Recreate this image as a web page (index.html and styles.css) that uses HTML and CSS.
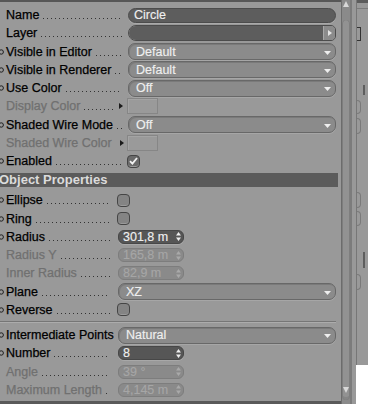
FILE: index.html
```html
<!DOCTYPE html>
<html>
<head>
<meta charset="utf-8">
<link rel="stylesheet" href="styles.css">
</head>
<body>
<div class="app">
  <div class="panel">
    <div class="topline"></div>
    <div class="sec basic">
      <div class="row">
        <div class="lab"><span class="mk"></span><span class="t">Name</span><span class="dots"></span></div>
        <div class="fld dark">Circle</div>
      </div>
      <div class="row">
        <div class="lab"><span class="mk"></span><span class="t">Layer</span><span class="dots"></span></div>
        <div class="layer"><div class="lay-f"></div><div class="lay-b"><svg width="4" height="6" viewBox="0 0 4 6"><path d="M0 0L4 3L0 6Z" fill="#e4e4e4"/></svg></div></div>
      </div>
      <div class="row">
        <div class="lab"><span class="mk"><svg width="5" height="6" viewBox="0 0 5 6"><circle cx="1.2" cy="3" r="2.2" fill="#9a9a9a" stroke="#1e1e1e"/></svg></span><span class="t">Visible in Editor</span><span class="dots"></span></div>
        <div class="fld drop"><span>Default</span><svg width="7" height="4" viewBox="0 0 7 4"><path d="M0 0H7L3.5 4Z" fill="#eee"/></svg></div>
      </div>
      <div class="row">
        <div class="lab"><span class="mk"><svg width="5" height="6" viewBox="0 0 5 6"><circle cx="1.2" cy="3" r="2.2" fill="#9a9a9a" stroke="#1e1e1e"/></svg></span><span class="t">Visible in Renderer</span><span class="dots"></span></div>
        <div class="fld drop"><span>Default</span><svg width="7" height="4" viewBox="0 0 7 4"><path d="M0 0H7L3.5 4Z" fill="#eee"/></svg></div>
      </div>
      <div class="row">
        <div class="lab"><span class="mk"><svg width="5" height="6" viewBox="0 0 5 6"><circle cx="1.2" cy="3" r="2.2" fill="#9a9a9a" stroke="#1e1e1e"/></svg></span><span class="t">Use Color</span><span class="dots"></span></div>
        <div class="fld drop"><span>Off</span><svg width="7" height="4" viewBox="0 0 7 4"><path d="M0 0H7L3.5 4Z" fill="#eee"/></svg></div>
      </div>
      <div class="row dis">
        <div class="lab"><span class="mk"></span><span class="t">Display Color</span><span class="dots short"></span><svg class="tri" width="4" height="6" viewBox="0 0 4 6"><path d="M0 0L4 3L0 6Z" fill="#1a1a1a"/></svg></div>
        <div class="swatch"></div>
      </div>
      <div class="row">
        <div class="lab"><span class="mk"><svg width="5" height="6" viewBox="0 0 5 6"><circle cx="1.2" cy="3" r="2.2" fill="#9a9a9a" stroke="#1e1e1e"/></svg></span><span class="t">Shaded Wire Mode</span><span class="dots"></span></div>
        <div class="fld drop"><span>Off</span><svg width="7" height="4" viewBox="0 0 7 4"><path d="M0 0H7L3.5 4Z" fill="#eee"/></svg></div>
      </div>
      <div class="row dis">
        <div class="lab"><span class="mk"></span><span class="t">Shaded Wire Color</span><span class="dots short"></span><svg class="tri" width="4" height="6" viewBox="0 0 4 6"><path d="M0 0L4 3L0 6Z" fill="#1a1a1a"/></svg></div>
        <div class="swatch"></div>
      </div>
      <div class="row">
        <div class="lab"><span class="mk"><svg width="5" height="6" viewBox="0 0 5 6"><circle cx="1.2" cy="3" r="2.2" fill="#9a9a9a" stroke="#1e1e1e"/></svg></span><span class="t">Enabled</span><span class="dots"></span></div>
        <div class="cb on"><svg width="9" height="8" viewBox="0 0 9 8"><path d="M1 4.2L3.4 6.6L8 1" fill="none" stroke="#f2f2f2" stroke-width="1.8"/></svg></div>
      </div>
    </div>

    <div class="hdr">Object Properties</div>

    <div class="sec obj">
      <div class="row">
        <div class="lab"><span class="mk"><svg width="5" height="6" viewBox="0 0 5 6"><circle cx="1.2" cy="3" r="2.2" fill="#9a9a9a" stroke="#1e1e1e"/></svg></span><span class="t">Ellipse</span><span class="dots"></span></div>
        <div class="cb"></div>
      </div>
      <div class="row">
        <div class="lab"><span class="mk"><svg width="5" height="6" viewBox="0 0 5 6"><circle cx="1.2" cy="3" r="2.2" fill="#9a9a9a" stroke="#1e1e1e"/></svg></span><span class="t">Ring</span><span class="dots"></span></div>
        <div class="cb"></div>
      </div>
      <div class="row">
        <div class="lab"><span class="mk"><svg width="5" height="6" viewBox="0 0 5 6"><circle cx="1.2" cy="3" r="2.2" fill="#9a9a9a" stroke="#1e1e1e"/></svg></span><span class="t">Radius</span><span class="dots"></span></div>
        <div class="fld num"><span>301,8 m</span><svg width="5" height="9" viewBox="0 0 5 9"><path d="M0 3.5L2.5 0L5 3.5ZM0 5.5H5L2.5 9Z" fill="#eee"/></svg></div>
      </div>
      <div class="row dis">
        <div class="lab"><span class="mk"></span><span class="t">Radius Y</span><span class="dots"></span></div>
        <div class="fld num off"><span>165,8 m</span><svg width="5" height="9" viewBox="0 0 5 9"><path d="M0 3.5L2.5 0L5 3.5ZM0 5.5H5L2.5 9Z" fill="#a9a9a9"/></svg></div>
      </div>
      <div class="row dis">
        <div class="lab"><span class="mk"></span><span class="t">Inner Radius</span><span class="dots"></span></div>
        <div class="fld num off"><span>82,9 m</span><svg width="5" height="9" viewBox="0 0 5 9"><path d="M0 3.5L2.5 0L5 3.5ZM0 5.5H5L2.5 9Z" fill="#a9a9a9"/></svg></div>
      </div>
      <div class="row">
        <div class="lab"><span class="mk"><svg width="5" height="6" viewBox="0 0 5 6"><circle cx="1.2" cy="3" r="2.2" fill="#9a9a9a" stroke="#1e1e1e"/></svg></span><span class="t">Plane</span><span class="dots"></span></div>
        <div class="fld drop"><span>XZ</span><svg width="7" height="4" viewBox="0 0 7 4"><path d="M0 0H7L3.5 4Z" fill="#eee"/></svg></div>
      </div>
      <div class="row">
        <div class="lab"><span class="mk"><svg width="5" height="6" viewBox="0 0 5 6"><circle cx="1.2" cy="3" r="2.2" fill="#9a9a9a" stroke="#1e1e1e"/></svg></span><span class="t">Reverse</span><span class="dots"></span></div>
        <div class="cb"></div>
      </div>
    </div>

    <div class="sep"></div>

    <div class="sec obj pts">
      <div class="row">
        <div class="lab"><span class="mk"><svg width="5" height="6" viewBox="0 0 5 6"><circle cx="1.2" cy="3" r="2.2" fill="#9a9a9a" stroke="#1e1e1e"/></svg></span><span class="t">Intermediate Points</span><span class="dots"></span></div>
        <div class="fld drop"><span>Natural</span><svg width="7" height="4" viewBox="0 0 7 4"><path d="M0 0H7L3.5 4Z" fill="#eee"/></svg></div>
      </div>
      <div class="row">
        <div class="lab"><span class="mk"><svg width="5" height="6" viewBox="0 0 5 6"><circle cx="1.2" cy="3" r="2.2" fill="#9a9a9a" stroke="#1e1e1e"/></svg></span><span class="t">Number</span><span class="dots"></span></div>
        <div class="fld num"><span>8</span><svg width="5" height="9" viewBox="0 0 5 9"><path d="M0 3.5L2.5 0L5 3.5ZM0 5.5H5L2.5 9Z" fill="#eee"/></svg></div>
      </div>
      <div class="row dis">
        <div class="lab"><span class="mk"></span><span class="t">Angle</span><span class="dots"></span></div>
        <div class="fld num off"><span>39 °</span><svg width="5" height="9" viewBox="0 0 5 9"><path d="M0 3.5L2.5 0L5 3.5ZM0 5.5H5L2.5 9Z" fill="#a9a9a9"/></svg></div>
      </div>
      <div class="row dis">
        <div class="lab"><span class="mk"></span><span class="t">Maximum Length</span><span class="dots"></span></div>
        <div class="fld num off"><span>4,145 m</span><svg width="5" height="9" viewBox="0 0 5 9"><path d="M0 3.5L2.5 0L5 3.5ZM0 5.5H5L2.5 9Z" fill="#a9a9a9"/></svg></div>
      </div>
    </div>
    <div class="botline"></div>
  </div>

  <div class="sb">
    <div class="sb-up"><svg width="6" height="6" viewBox="0 0 6 6"><path d="M0 6L3 0L6 6Z" fill="#d8d8d8"/></svg></div>
    <div class="sb-thumb"><svg width="6" height="6" viewBox="0 0 6 6"><path d="M0 0H6L3 6Z" fill="#d8d8d8"/></svg></div>
  </div>

  <div class="side">
    <div class="side-in">
      <div class="s-cap"></div>
      <div class="s-box"></div>
      <div class="s-mark m1"></div>
      <div class="s-tab t1"></div>
      <div class="s-tab t2"></div>
      <div class="s-tab t3"></div>
      <div class="s-tab t4"></div>
      <div class="s-mark m2"></div>
      <div class="s-tab t5"></div>
      <div class="s-white"></div>
    </div>
  </div>
</div>
</body>
</html>
```

FILE: styles.css
```css
* { box-sizing: border-box; margin: 0; padding: 0; }
html, body { width: 368px; height: 404px; overflow: hidden; }
body {
  background: #999999;
  font-family: "Liberation Sans", Arial, sans-serif;
  font-size: 12.5px;
  color: #000;
}
.app { display: flex; height: 404px; }

.panel { width: 341px; display: flex; flex-direction: column; }
.topline { height: 2px; background: #575757; margin-bottom: 4px; }
.botline { height: 3px; background: #5a5a5a; margin-top: auto; }

.row {
  height: 18.25px;
  display: grid;
  grid-template-columns: 128px 208px;
  align-items: center;
}
.obj .row { grid-template-columns: 118px 218px; }

.lab { display: flex; align-items: baseline; white-space: nowrap; }
.t { -webkit-text-stroke: 0.25px currentColor; }
.mk { width: 6px; height: 6px; flex: none; align-self: center; display: flex; }
.dots {
  flex: 1;
  height: 1px;
  margin-left: 4px;
  margin-right: 6px;
  background-image: repeating-linear-gradient(to right, #333333 0 1px, transparent 1px 4px);
}
.obj .dots { margin-right: 8px; }
.dots.short { margin-right: 4px; }
.tri { flex: none; align-self: center; margin-right: 5px; }
.dis .t { color: #707070; }

.hdr {
  height: 14px;
  margin: 3px 3px 4px 0;
  background: #5b5b5b;
  color: #dcdcdc;
  font-weight: bold;
  font-size: 13px;
  line-height: 14px;
  text-indent: -1px;
  white-space: nowrap;
}
.sep {
  height: 2px;
  margin: 2px 5px 3px 0;
  border-top: 1px solid #767676;
  border-bottom: 1px solid #acacac;
}

.fld {
  display: flex;
  align-items: center;
  color: #efefef;
  white-space: nowrap;
  -webkit-text-stroke: 0.15px currentColor;
}
.dark {
  height: 15px;
  border-radius: 8px;
  background: #5d5d5d;
  border: 1px solid #4c4c4c;
  box-shadow: 0 1px 0 #a9a9a9;
  padding-left: 5px;
}
.drop {
  height: 17px;
  border-radius: 7px;
  background: #8b8b8b;
  border: 1px solid #686868;
  box-shadow: inset 1px 1px 0 #7a7a7a, 0 1px 0 #a6a6a6;
  padding: 0 4px 0 7px;
  justify-content: space-between;
}
.drop svg { margin-top: 2px; }
.num {
  width: 66px;
  height: 14px;
  border-radius: 6px;
  background: #565656;
  border: 1px solid #474747;
  box-shadow: 0 1px 0 #a8a8a8;
  padding: 0 2px 0 4px;
  justify-content: space-between;
}
.num.off {
  background: #8a8a8a;
  border-color: #7d7d7d;
  color: #a6a6a6;
  box-shadow: none;
}

.layer {
  height: 16px;
  display: flex;
  border-radius: 8px 5px 5px 8px;
  overflow: hidden;
  border: 1px solid #4c4c4c;
}
.lay-f { flex: 1; background: #5d5d5d; }
.lay-b {
  width: 12px;
  background: #8b8b8b;
  border-left: 1px solid #a8a8a8;
  display: flex;
  align-items: center;
  justify-content: center;
}

.swatch {
  width: 31px;
  height: 16px;
  border: 1px solid #868686;
  box-shadow: inset 1px 1px 0 #a4a4a4;
  background: #9a9a9a;
  margin-left: -1px;
}

.cb {
  width: 13px;
  height: 13px;
  border-radius: 4px;
  background: #848484;
  border: 1px solid #454545;
  box-shadow: inset 0 -1px 0 #9a9a9a;
  margin-left: -1px;
}
.cb.on {
  background: #6a6a6a;
  display: flex;
  align-items: center;
  justify-content: center;
}

/* scrollbar */
.sb {
  width: 11px;
  display: flex;
  flex-direction: column;
  background: #8a8a8a;
  border-left: 1px solid #6c6c6c;
  border-right: 2px solid #7c7c7c;
}
.sb-up {
  height: 20px;
  display: flex;
  justify-content: center;
  padding-top: 1px;
}
.sb-thumb {
  flex: 1;
  margin: 0 0 4px 0;
  border-radius: 4px;
  background: #929292;
  box-shadow: inset 1px 0 0 #7e7e7e, inset -1px 0 0 #7e7e7e, inset 0 -3px 0 #858585;
  display: flex;
  align-items: flex-end;
  justify-content: center;
  padding-bottom: 7px;
}

/* neighbouring panel edge */
.side { width: 16px; display: flex; padding-left: 4px; }
.side-in {
  flex: 1;
  border-left: 1px solid #777;
  display: flex;
  flex-direction: column;
}
.s-cap { height: 9px; border-bottom: 1px solid #7b7b7b; background: linear-gradient(#5c5c5c 0 3px, transparent 3px); }
.s-box { width: 4px; height: 14px; margin-top: 18px; border: 1px solid #333; border-left: 0; }
.s-mark { width: 2px; height: 10px; background: #5f5f5f; margin-left: 6px; }
.m1 { margin-top: 44px; }
.s-tab { width: 4px; height: 14px; border: 1px solid #7a7a7a; border-left: 0; border-radius: 0 5px 5px 0; }
.t1 { margin-top: 5px; }
.t2 { margin-top: 4px; height: 16px; }
.t3 { margin-top: 58px; height: 16px; }
.t4 { margin-top: 3px; height: 15px; }
.m2 { margin-top: 26px; height: 16px; }
.t5 { margin-top: 6px; height: 16px; }
.s-white { margin-top: auto; height: 39px; background: #ffffff; margin-left: -1px; }
```
